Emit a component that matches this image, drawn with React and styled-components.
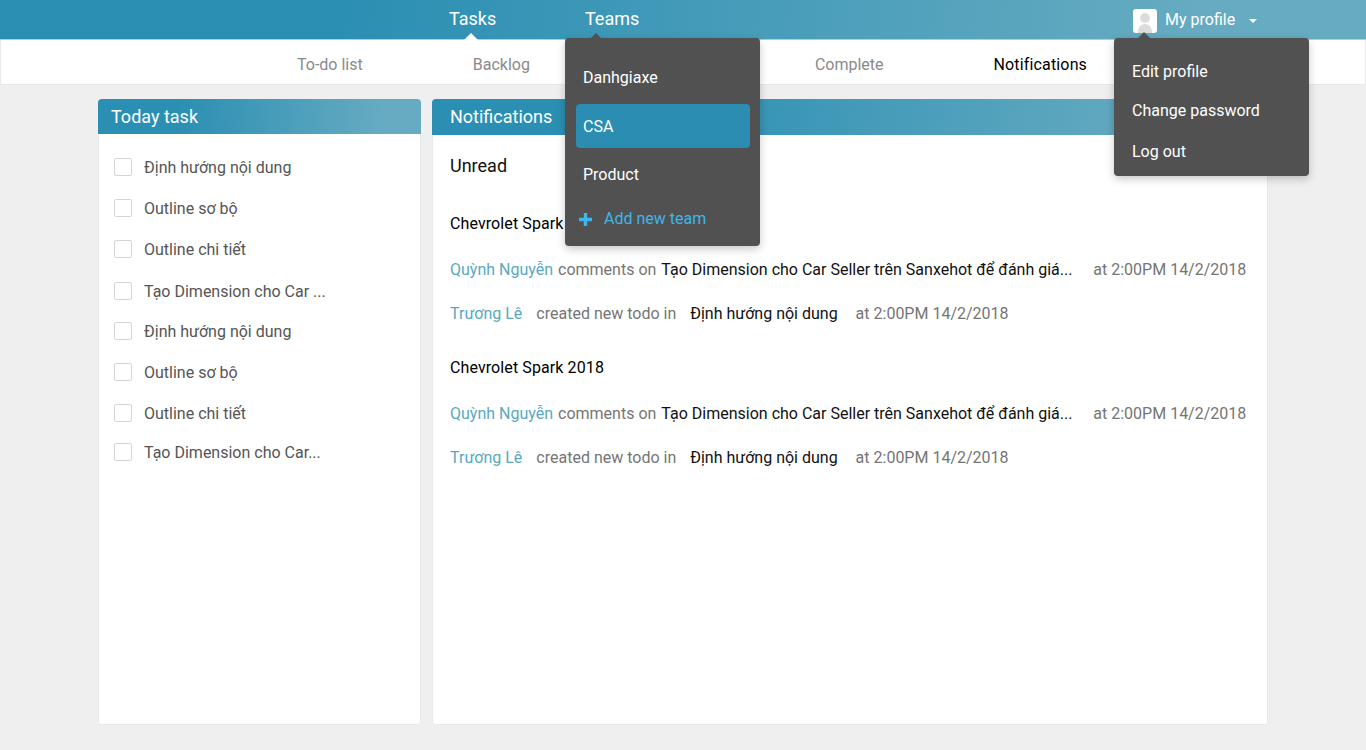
import React from 'react'
import styled, { createGlobalStyle } from 'styled-components'

const GlobalStyle = createGlobalStyle`
    html, body {
        margin: 0;
        padding: 0;
        background: #efefef;
        font-family: Roboto, "Noto Sans", sans-serif;
    }
    * { box-sizing: border-box; }
`
const gradient = 'linear-gradient(95deg, #2b8fb3 25%, #66abc1 88%)'

const Page = styled.div`
    width: 1366px;
    height: 750px;
    overflow: hidden;
`
const TopBar = styled.header`
    display: flex;
    height: 40px;
    padding-left: 449px;
    background: ${gradient};
    border-bottom: 1px solid #a9d0de;
`
const TopLink = styled.div`
    position: relative;
    width: ${(p) => p.$width}px;
    font-size: 18px;
    line-height: 38px;
    color: #fff;
`
const Caret = styled.span`
    position: absolute;
    left: ${(p) => p.$left}px;
    bottom: ${(p) => p.$bottom ?? -1}px;
    width: 0;
    height: 0;
    border-left: 7px solid transparent;
    border-right: 7px solid transparent;
    border-bottom: 7px solid ${(p) => p.$color};
    z-index: 3;
`
const Profile = styled.div`
    position: relative;
    display: flex;
    align-items: center;
    margin-left: 494px;
    height: 39px;
    font-size: 16px;
    color: #fff;
`
const Avatar = styled.span`
    display: block;
    width: 24px;
    height: 24px;
    margin-top: 3px;
    margin-right: 8px;
    border-radius: 3px;
    background: #fff;
    overflow: hidden;
`
const ProfileArrow = styled.span`
    width: 0;
    height: 0;
    margin: 2px 0 0 14px;
    border-left: 4.5px solid transparent;
    border-right: 4.5px solid transparent;
    border-top: 4px solid #fff;
`
const SubNav = styled.nav`
    display: flex;
    gap: 110px;
    height: 45px;
    padding-left: 296px;
    background: #fff;
    border: 1px solid #e8e8e8;
    border-top: 0;
`
const SubLink = styled.a`
    font-size: 16px;
    line-height: 50px;
    letter-spacing: ${(p) => (p.$active ? '0.15px' : 0)};
    min-width: ${(p) => p.$min || 0}px;
    color: ${(p) => (p.$active ? '#000' : '#8a8a8a')};
`
const Menu = styled.div`
    position: absolute;
    top: 38px;
    left: ${(p) => p.$left}px;
    width: 195px;
    height: ${(p) => p.$height}px;
    padding: ${(p) => p.$pad};
    background: #515151;
    border-radius: 4px;
    box-shadow: 0 3px 8px rgba(0, 0, 0, 0.22);
    z-index: 2;
`
const TeamItem = styled.div`
    height: 44px;
    margin-bottom: ${(p) => p.$gap || 0}px;
    padding-left: 7px;
    border-radius: 4px;
    font-size: 16px;
    line-height: 46px;
    color: #fff;
    background: ${(p) => (p.$active ? '#2b8db2' : 'transparent')};
`
const AddTeam = styled.div`
    display: flex;
    align-items: center;
    gap: 12px;
    height: 30px;
    padding-left: 3px;
    font-size: 16px;
    color: #3fb6ea;
`
const ProfileItem = styled.div`
    height: ${(p) => p.$height}px;
    font-size: 16px;
    line-height: ${(p) => p.$height}px;
    color: #fff;
`
const Content = styled.main`
    display: flex;
    gap: 11px;
    padding: 14px 0 0 98px;
`
const Panel = styled.section`
    width: ${(p) => p.$width}px;
    height: 626px;
    background: #fff;
    border-radius: 4px;
    box-shadow: 0 0 0 1px #e9e9e9 inset;
`
const PanelTitle = styled.h2`
    height: ${(p) => p.$height}px;
    margin: 0;
    padding-left: ${(p) => p.$pad}px;
    border-radius: 4px 4px 0 0;
    background: ${gradient};
    font-size: 18px;
    font-weight: 400;
    line-height: 36px;
    color: #fff;
`
const TaskList = styled.ul`
    margin: 0;
    padding: 13px 0 0 16px;
    list-style: none;
`
const TaskRow = styled.li`
    display: flex;
    align-items: center;
    gap: 12px;
    height: 40px;
    margin-top: ${(p) => p.$gap}px;
    font-size: 16px;
    color: #555;
`
const Check = styled.span`
    width: 18px;
    height: 18px;
    border: 1px solid #d6d6d6;
    border-radius: 2px;
    background: #fff;
`
const NotifBody = styled.div`
    padding: 0 18px;
`
const Unread = styled.div`
    height: 66px;
    padding-top: 19px;
    font-size: 18px;
    line-height: 24px;
    color: #111;
`
const Group = styled.div`
    margin-bottom: 10px;
`
const CarTitle = styled.div`
    height: 46px;
    font-size: 16px;
    line-height: 46px;
    letter-spacing: 0.1px;
    color: #000;
`
const NotifRow = styled.div`
    display: flex;
    height: 44px;
    align-items: center;
    font-size: 16px;
    color: #757575;
    white-space: nowrap;
`
const Who = styled.span`
    color: #5aa8c2;
    margin-right: ${(p) => p.$gap}px;
`
const What = styled.span`
    margin-right: ${(p) => p.$gap}px;
`
const Target = styled.span`
    color: #111;
    width: ${(p) => p.$width}px;
    margin-right: ${(p) => p.$gap}px;
`

const tasks = [
    ['Định hướng nội dung', 0],
    ['Outline sơ bộ', 1],
    ['Outline chi tiết', 1],
    ['Tạo Dimension cho Car ...', 2],
    ['Định hướng nội dung', 0],
    ['Outline sơ bộ', 1],
    ['Outline chi tiết', 1],
    ['Tạo Dimension cho Car...', -1],
]

function NotifGroup() {
    return (
        <Group>
            <CarTitle>Chevrolet Spark 2018</CarTitle>
            <NotifRow>
                <Who $gap={5}>Quỳnh Nguyễn</Who>
                <What $gap={5}>comments on</What>
                <Target $width={411} $gap={21}>Tạo Dimension cho Car Seller trên Sanxehot để đánh giá...</Target>
                <span>at 2:00PM 14/2/2018</span>
            </NotifRow>
            <NotifRow>
                <Who $gap={14}>Trương Lê</Who>
                <What $gap={14}>created new todo in</What>
                <Target $gap={18}>Định hướng nội dung</Target>
                <span>at 2:00PM 14/2/2018</span>
            </NotifRow>
        </Group>
    )
}

function App() {
    return (
        <Page>
            <GlobalStyle />
            <TopBar>
                <TopLink $width={136}>
                    Tasks
                    <Caret $left={15} $color="#fff" />
                </TopLink>
                <TopLink $width={54}>
                    Teams
                    <Caret $left={4} $color="#515151" />
                    <Menu $left={-20} $height={208} $pad="17px 10px 0 11px">
                        <TeamItem $gap={5}>Danhgiaxe</TeamItem>
                        <TeamItem $active $gap={4}>CSA</TeamItem>
                        <TeamItem $gap={8}>Product</TeamItem>
                        <AddTeam>
                            <svg width="13" height="13" viewBox="0 0 13 13"><path d="M6.5 0v13M0 6.5h13" stroke="#3fb6ea" strokeWidth="3.4" /></svg>
                            Add new team
                        </AddTeam>
                    </Menu>
                </TopLink>
                <Profile>
                    <Avatar>
                        <svg width="24" height="24" viewBox="0 0 24 24">
                            <circle cx="12" cy="9" r="5" fill="#dcdcdc" />
                            <path d="M5 24c0-6 3-9 7-9s7 3 7 9z" fill="#dcdcdc" />
                        </svg>
                    </Avatar>
                    My profile
                    <ProfileArrow />
                    <Caret $left={4} $bottom={0} $color="#515151" />
                    <Menu $left={-19} $height={138} $pad="14px 0 0 18px">
                        <ProfileItem $height={40}>Edit profile</ProfileItem>
                        <ProfileItem $height={38}>Change password</ProfileItem>
                        <ProfileItem $height={44}>Log out</ProfileItem>
                    </Menu>
                </Profile>
            </TopBar>
            <SubNav>
                <SubLink>To-do list</SubLink>
                <SubLink>Backlog</SubLink>
                <SubLink $min={65}>Doing</SubLink>
                <SubLink>Complete</SubLink>
                <SubLink $active>Notifications</SubLink>
            </SubNav>
            <Content>
                <Panel $width={323}>
                    <PanelTitle $height={35} $pad={13}>Today task</PanelTitle>
                    <TaskList>
                        {tasks.map(([text, gap], i) => (
                            <TaskRow key={i} $gap={gap}>
                                <Check />
                                {text}
                            </TaskRow>
                        ))}
                    </TaskList>
                </Panel>
                <Panel $width={836}>
                    <PanelTitle $height={36} $pad={18}>Notifications</PanelTitle>
                    <NotifBody>
                        <Unread>Unread</Unread>
                        <NotifGroup />
                        <NotifGroup />
                    </NotifBody>
                </Panel>
            </Content>
        </Page>
    )
}

export default App
